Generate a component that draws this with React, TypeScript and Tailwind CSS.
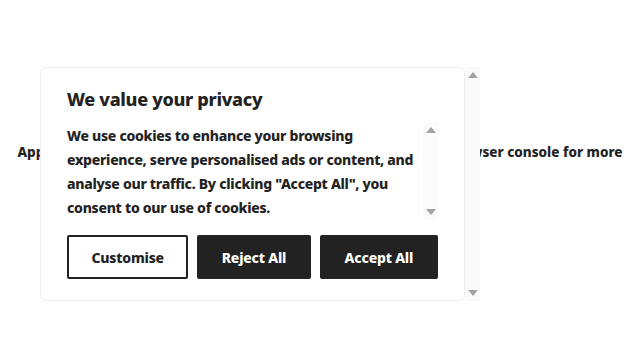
function ScrollTrack({ className }: { className: string }) {
  return (
    <div className={`flex flex-col items-center justify-between shrink-0 ${className}`}>
      <svg width="10" height="6" viewBox="0 0 10 6" className="mt-[5px]">
        <path d="M0 6 L5 0 L10 6 Z" fill="#a3a3a3" />
      </svg>
      <svg width="10" height="6" viewBox="0 0 10 6" className="mb-[5px]">
        <path d="M0 0 L10 0 L5 6 Z" fill="#a3a3a3" />
      </svg>
    </div>
  );
}

export default function App() {
  const font = { fontFamily: '"Noto Sans", "DejaVu Sans", sans-serif' };
  return (
    <div className="relative w-[640px] h-[341px] bg-white overflow-hidden" style={font}>
      {/* page behind the banner */}
      <div className="pt-[142px] px-4 text-center">
        <h2 className="text-[13.5px] leading-[20px] font-extrabold text-[#222]">
          Application error: a client-side exception has occurred (see the browser console for more information).
        </h2>
      </div>

      {/* cookie banner */}
      <div className="absolute left-[40px] top-[67px] flex h-[234px]">
        <div className="w-[425px] bg-white border border-[#ececec] rounded-md pl-[26px] pr-[26px] pt-[18px]">
          <h3 className="text-[18px] leading-[26px] font-extrabold tracking-[-0.3px] text-[#222]">We value your privacy</h3>
          <div className="mt-[12px] flex h-[96px]">
            <p className="flex-1 text-[14px] leading-[24px] font-extrabold tracking-[-0.28px] text-[#222]">
              We use cookies to enhance your browsing experience, serve personalised ads or content, and
              analyse our traffic. By clicking "Accept All", you consent to our use of cookies.
            </p>
            <ScrollTrack className="w-[15px] -mt-[2px] h-[98px] bg-[#fbfbfb]" />
          </div>
          <div className="flex gap-[9px] mt-[15px]">
            <button className="w-[122px] h-[44px] border-2 border-[#222] rounded-[2px] bg-white text-[#222] text-[14px] font-extrabold tracking-[-0.2px]">
              Customise
            </button>
            <button className="w-[114px] h-[44px] rounded-[2px] bg-[#222] text-white text-[14px] font-extrabold tracking-[-0.2px]">
              Reject All
            </button>
            <button className="w-[119px] h-[44px] rounded-[2px] bg-[#222] text-white text-[14px] font-extrabold tracking-[-0.2px]">
              Accept All
            </button>
          </div>
        </div>
        <ScrollTrack className="w-[15px] h-full bg-[#f9f9f9]" />
      </div>
    </div>
  );
}
